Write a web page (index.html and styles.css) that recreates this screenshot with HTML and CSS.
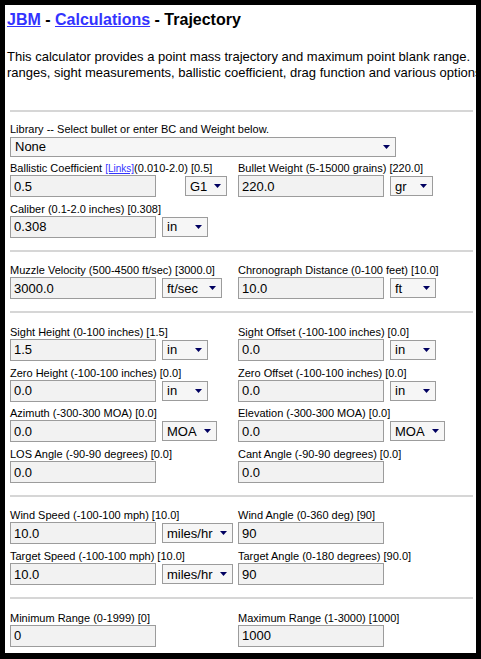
FILE: index.html
```html
<!DOCTYPE html>
<html lang="en">
<head>
    <meta charset="UTF-8">
    <title>JBM - Calculations - Trajectory</title>
    <link rel="stylesheet" href="styles.css">
</head>
<body>
    <div class="window">
        <h1 class="title"><a href="#">JBM</a> - <a href="#">Calculations</a> - Trajectory</h1>
        <p class="intro">This calculator provides a point mass trajectory and maximum point blank range.<br>ranges, sight measurements, ballistic coefficient, drag function and various options.</p>

        <form class="calc">
            <div class="section first">
                <div class="field lib">
                    <label>Library -- Select bullet or enter BC and Weight below.</label>
                    <div class="ctrl">
                        <span class="sel"><select class="w-lib"><option>None</option></select><svg class="arrow" viewBox="0 0 7 4"><path d="M0 0h7L3.5 4z"/></svg></span>
                    </div>
                </div>
                <div class="row">
                    <div class="field">
                        <label>Ballistic Coefficient <a class="small" href="#">[Links]</a>(0.010-2.0) [0.5]</label>
                        <div class="ctrl">
                            <input type="text" value="0.5">
                            <span class="sel push"><select class="w-g1"><option>G1</option></select><svg class="arrow" viewBox="0 0 7 4"><path d="M0 0h7L3.5 4z"/></svg></span>
                        </div>
                    </div>
                    <div class="field">
                        <label>Bullet Weight (5-15000 grains) [220.0]</label>
                        <div class="ctrl">
                            <input type="text" value="220.0">
                            <span class="sel"><select class="w-gr"><option>gr</option></select><svg class="arrow" viewBox="0 0 7 4"><path d="M0 0h7L3.5 4z"/></svg></span>
                        </div>
                    </div>
                </div>
                <div class="row">
                    <div class="field">
                        <label>Caliber (0.1-2.0 inches) [0.308]</label>
                        <div class="ctrl">
                            <input type="text" value="0.308">
                            <span class="sel"><select class="w-in"><option>in</option></select><svg class="arrow" viewBox="0 0 7 4"><path d="M0 0h7L3.5 4z"/></svg></span>
                        </div>
                    </div>
                </div>
            </div>

            <div class="section">
                <div class="row">
                    <div class="field">
                        <label>Muzzle Velocity (500-4500 ft/sec) [3000.0]</label>
                        <div class="ctrl">
                            <input type="text" value="3000.0">
                            <span class="sel"><select class="w-fts"><option>ft/sec</option></select><svg class="arrow" viewBox="0 0 7 4"><path d="M0 0h7L3.5 4z"/></svg></span>
                        </div>
                    </div>
                    <div class="field">
                        <label>Chronograph Distance (0-100 feet) [10.0]</label>
                        <div class="ctrl">
                            <input type="text" value="10.0">
                            <span class="sel"><select class="w-in"><option>ft</option></select><svg class="arrow" viewBox="0 0 7 4"><path d="M0 0h7L3.5 4z"/></svg></span>
                        </div>
                    </div>
                </div>
            </div>

            <div class="section">
                <div class="row">
                    <div class="field">
                        <label>Sight Height (0-100 inches) [1.5]</label>
                        <div class="ctrl">
                            <input type="text" value="1.5">
                            <span class="sel"><select class="w-in"><option>in</option></select><svg class="arrow" viewBox="0 0 7 4"><path d="M0 0h7L3.5 4z"/></svg></span>
                        </div>
                    </div>
                    <div class="field">
                        <label>Sight Offset (-100-100 inches) [0.0]</label>
                        <div class="ctrl">
                            <input type="text" value="0.0">
                            <span class="sel"><select class="w-in"><option>in</option></select><svg class="arrow" viewBox="0 0 7 4"><path d="M0 0h7L3.5 4z"/></svg></span>
                        </div>
                    </div>
                </div>
                <div class="row">
                    <div class="field">
                        <label>Zero Height (-100-100 inches) [0.0]</label>
                        <div class="ctrl">
                            <input type="text" value="0.0">
                            <span class="sel"><select class="w-in"><option>in</option></select><svg class="arrow" viewBox="0 0 7 4"><path d="M0 0h7L3.5 4z"/></svg></span>
                        </div>
                    </div>
                    <div class="field">
                        <label>Zero Offset (-100-100 inches) [0.0]</label>
                        <div class="ctrl">
                            <input type="text" value="0.0">
                            <span class="sel"><select class="w-in"><option>in</option></select><svg class="arrow" viewBox="0 0 7 4"><path d="M0 0h7L3.5 4z"/></svg></span>
                        </div>
                    </div>
                </div>
                <div class="row">
                    <div class="field">
                        <label>Azimuth (-300-300 MOA) [0.0]</label>
                        <div class="ctrl">
                            <input type="text" value="0.0">
                            <span class="sel"><select class="w-moa"><option>MOA</option></select><svg class="arrow" viewBox="0 0 7 4"><path d="M0 0h7L3.5 4z"/></svg></span>
                        </div>
                    </div>
                    <div class="field">
                        <label>Elevation (-300-300 MOA) [0.0]</label>
                        <div class="ctrl">
                            <input type="text" value="0.0">
                            <span class="sel"><select class="w-moa"><option>MOA</option></select><svg class="arrow" viewBox="0 0 7 4"><path d="M0 0h7L3.5 4z"/></svg></span>
                        </div>
                    </div>
                </div>
                <div class="row">
                    <div class="field">
                        <label>LOS Angle (-90-90 degrees) [0.0]</label>
                        <div class="ctrl">
                            <input type="text" value="0.0">
                        </div>
                    </div>
                    <div class="field">
                        <label>Cant Angle (-90-90 degrees) [0.0]</label>
                        <div class="ctrl">
                            <input type="text" value="0.0">
                        </div>
                    </div>
                </div>
            </div>

            <div class="section">
                <div class="row">
                    <div class="field">
                        <label>Wind Speed (-100-100 mph) [10.0]</label>
                        <div class="ctrl">
                            <input type="text" value="10.0">
                            <span class="sel"><select class="w-mph"><option>miles/hr</option></select><svg class="arrow" viewBox="0 0 7 4"><path d="M0 0h7L3.5 4z"/></svg></span>
                        </div>
                    </div>
                    <div class="field">
                        <label>Wind Angle (0-360 deg) [90]</label>
                        <div class="ctrl">
                            <input type="text" value="90">
                        </div>
                    </div>
                </div>
                <div class="row">
                    <div class="field">
                        <label>Target Speed (-100-100 mph) [10.0]</label>
                        <div class="ctrl">
                            <input type="text" value="10.0">
                            <span class="sel"><select class="w-mph"><option>miles/hr</option></select><svg class="arrow" viewBox="0 0 7 4"><path d="M0 0h7L3.5 4z"/></svg></span>
                        </div>
                    </div>
                    <div class="field">
                        <label>Target Angle (0-180 degrees) [90.0]</label>
                        <div class="ctrl">
                            <input type="text" value="90">
                        </div>
                    </div>
                </div>
            </div>

            <div class="section">
                <div class="row">
                    <div class="field">
                        <label>Minimum Range (0-1999) [0]</label>
                        <div class="ctrl">
                            <input type="text" value="0">
                        </div>
                    </div>
                    <div class="field">
                        <label>Maximum Range (1-3000) [1000]</label>
                        <div class="ctrl">
                            <input type="text" value="1000">
                        </div>
                    </div>
                </div>
            </div>

            <div class="section"></div>
        </form>
    </div>
</body>
</html>
```

FILE: styles.css
```css
* {
    margin: 0;
    padding: 0;
    box-sizing: border-box;
}
html, body {
    height: 100%;
}
body {
    background-color: #000;
    padding: 5px;
    font-family: "Liberation Sans", Arial, sans-serif;
    color: #000;
}
a {
    color: #3333ff;
}

/* white browser area, content runs off the right edge */
.window {
    width: 471px;
    height: 648px;
    background-color: #fff;
    overflow: hidden;
    padding-top: 6px;
}
.title {
    padding-left: 2px;
    font-size: 16px;
    line-height: 18px;
    font-weight: bold;
    white-space: nowrap;
}
.intro {
    margin: 20px 0 0 2px;
    font-size: 13px;
    line-height: 16px;
    white-space: nowrap;
}

.calc {
    margin: 29px 0 0 5px;
    width: 463px;
}
.section {
    border-top: 2px solid #d6d6d6;
    padding: 12.5px 0 6.3px;
}
.section.first {
    padding-top: 10.6px;
}
.row {
    display: flex;
    margin-bottom: 5.7px;
}
.field {
    width: 228px;
}
.field.lib {
    width: auto;
    margin-bottom: 5.7px;
}
.field label {
    display: block;
    height: 13px;
    font-size: 11px;
    line-height: 13px;
    white-space: nowrap;
}
.field label .small {
    font-size: 10px;
}
.ctrl {
    display: flex;
    align-items: center;
    gap: 6px;
}
.field.lib .ctrl {
    padding-top: 1px;
}

input,
select {
    font-family: "Liberation Sans", Arial, sans-serif;
    font-size: 13px;
    color: #000;
    border: 1px solid #9c9c9c;
    border-radius: 0;
    background-color: #f2f2f2;
    outline: none;
}
input {
    width: 146px;
    height: 22px;
    padding: 0 3px;
}

.sel {
    position: relative;
    display: block;
    height: 20px;
}
.sel select {
    appearance: none;
    -webkit-appearance: none;
    height: 20px;
    padding: 0 0 0 4px;
    background-color: #f6f6f6;
}
.sel .arrow {
    position: absolute;
    right: 6px;
    top: 8px;
    width: 7px;
    height: 4px;
    fill: #000060;
}
.sel.push {
    margin-left: 23px;
}

.w-lib { width: 386px; }
.w-g1 { width: 42px; }
.w-gr { width: 43px; }
.w-in { width: 46px; }
.w-fts { width: 60px; }
.w-moa { width: 55px; }
.w-mph { width: 71px; }
```
